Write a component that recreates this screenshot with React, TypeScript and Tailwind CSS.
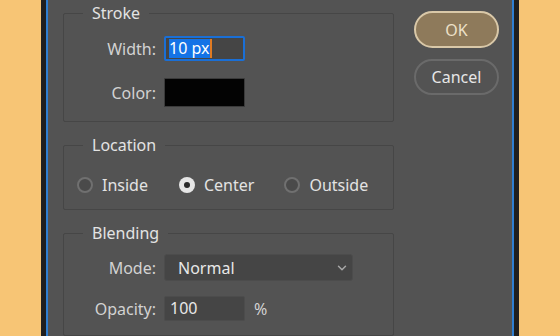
import { ChevronDown } from "lucide-react";

const font = { fontFamily: '"Noto Sans", "Open Sans", sans-serif' };

function Legend({ children }: { children: string }) {
  return (
    <legend className="ml-[19px] px-[9px] text-[16px] leading-[20px] text-[#e3e3e3]">
      {children}
    </legend>
  );
}

function Label({ children }: { children: string }) {
  return (
    <span className="w-[92px] shrink-0 text-right text-[16px] leading-[20px] text-[#d2d2d2]">
      {children}
    </span>
  );
}

function Radio({ label, checked }: { label: string; checked?: boolean }) {
  return (
    <div className="flex items-center gap-[9px]">
      {checked ? (
        <span className="flex h-[16px] w-[16px] items-center justify-center rounded-full bg-[#e6e6e6]">
          <span className="h-[6px] w-[6px] rounded-full bg-[#2a2a2a]" />
        </span>
      ) : (
        <span className="h-[16px] w-[16px] rounded-full border-2 border-[#707070] bg-[#4a4a4a]" />
      )}
      <span className="text-[16px] leading-[20px] text-[#e3e3e3]">{label}</span>
    </div>
  );
}

export default function App() {
  return (
    <div className="flex h-[336px] w-[560px] bg-[#f7c575]" style={font}>
      <div className="w-[41px] shrink-0" />

      <div className="flex w-[478px] shrink-0 bg-[#1f1f1f] px-[5px]">
        <div className="flex flex-1 border-x-2 border-[#2f7fd1] bg-[#535353] pl-[15px]">
          {/* groups */}
          <div className="flex w-[331px] flex-col pt-[3px]">
            <fieldset className="rounded-[2px] border border-[#464646] px-0 pt-[13px] pb-[14px]">
              <Legend>Stroke</Legend>
              <div className="flex items-center gap-[8px]">
                <Label>Width:</Label>
                <div className="flex h-[25px] w-[81px] items-center rounded-[2px] border-2 border-[#1a6fd6] bg-[#454545] pl-[3px]">
                  <span className="bg-[#1473e6] pr-[1px] text-[16px] leading-[19px] text-white">
                    10 px
                  </span>
                  <span className="h-[19px] w-[2px] bg-[#e07a22]" />
                </div>
              </div>
              <div className="mt-[17px] flex items-center gap-[8px]">
                <Label>Color:</Label>
                <div className="h-[29px] w-[81px] rounded-[1px] border border-[#3a3a3a] bg-[#030303]" />
              </div>
            </fieldset>

            <fieldset className="mt-[13px] rounded-[2px] border border-[#464646] px-0 pt-[20px] pb-[14px]">
              <Legend>Location</Legend>
              <div className="flex items-center pl-[13px]">
                <Radio label="Inside" />
                <div className="ml-[31px]">
                  <Radio label="Center" checked />
                </div>
                <div className="ml-[30px]">
                  <Radio label="Outside" />
                </div>
              </div>
            </fieldset>

            <fieldset className="mt-[13px] rounded-[2px] border border-[#464646] px-0 pt-[11px] pb-[14px]">
              <Legend>Blending</Legend>
              <div className="flex items-center gap-[8px]">
                <Label>Mode:</Label>
                <div className="flex h-[27px] w-[189px] items-center justify-between rounded-[3px] border border-[#4c4c4c] bg-[#454545] pl-[13px] pr-[3px]">
                  <span className="text-[16px] leading-[20px] text-[#e8e8e8]">Normal</span>
                  <ChevronDown size={14} strokeWidth={2.5} className="text-[#a8a8a8]" />
                </div>
              </div>
              <div className="mt-[15px] flex items-center gap-[8px]">
                <Label>Opacity:</Label>
                <div className="flex h-[25px] w-[81px] items-center rounded-[2px] border border-[#4c4c4c] bg-[#454545] pl-[5px]">
                  <span className="text-[16px] leading-[19px] text-[#e8e8e8]">100</span>
                </div>
                <span className="ml-[1px] text-[16px] leading-[20px] text-[#d2d2d2]">%</span>
              </div>
            </fieldset>
          </div>

          {/* buttons */}
          <div className="ml-[20px] flex w-[85px] flex-col gap-[11px] pt-[11px]">
            <button className="flex h-[37px] items-center justify-center rounded-full border-2 border-[#d9c8a8] bg-[#8e7a5b] text-[16px] text-[#ece0c8]">
              OK
            </button>
            <button className="flex h-[36px] items-center justify-center rounded-full border-2 border-[#6a6a6a] text-[16px] text-[#e6e6e6]">
              Cancel
            </button>
          </div>
        </div>
      </div>

      <div className="flex-1" />
    </div>
  );
}
